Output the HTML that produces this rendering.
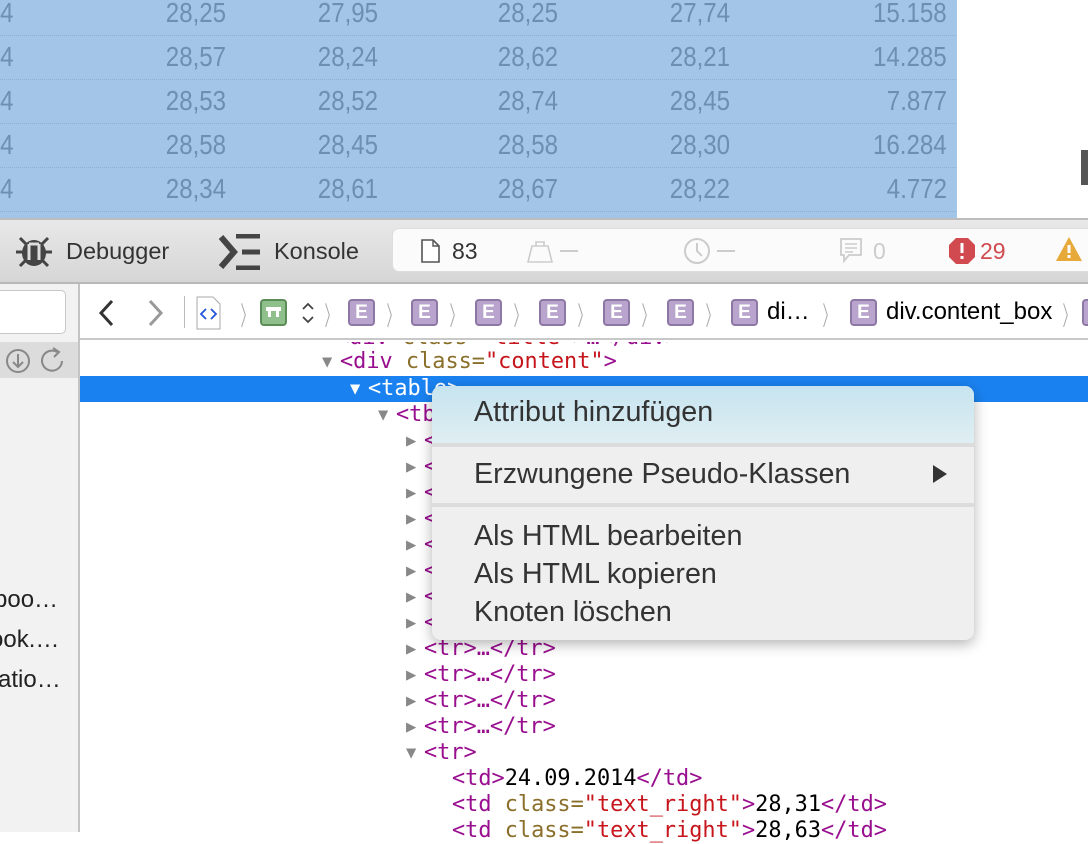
<!DOCTYPE html>
<html><head><meta charset="utf-8"><style>
*{margin:0;padding:0;box-sizing:border-box}
body{width:1088px;height:832px;overflow:hidden;position:relative;background:#fff;font-family:"Liberation Sans",sans-serif}
.abs{position:absolute}
#top{left:0;top:0;width:957px;height:218px;background:#a3c5e7;overflow:hidden}
.tr{position:absolute;left:0;width:957px;height:44px;border-bottom:1px dotted #8fb0d0}
.tr span{position:absolute;top:6px;line-height:30px;font-size:28px;color:#6d8fb0;transform:scaleX(.86);transform-origin:right}
#tb{left:0;top:218px;width:1088px;height:66px;background:linear-gradient(#e8e8e8,#d6d6d6);border-top:2px solid #bdbdbd;border-bottom:2px solid #b8b8b8}
.tl{position:absolute;font-size:23.5px;color:#333;top:18px}
#tabs{left:392px;top:228px;width:720px;height:44px;background:#fbfbfb;border-radius:7px;border:1px solid #ddd}
#bc{left:80px;top:284px;width:1008px;height:56px;background:#fff;border-bottom:2px solid #c8c8c8}
#side{left:0;top:284px;width:80px;height:548px;background:#f2f2f2;border-right:2px solid #c4c4c4}
.E{position:absolute;top:299px;width:27px;height:27px;background:#b8a4cc;border:2px solid #8d77a6;border-radius:4px;color:#fff;font-size:19px;font-weight:bold;text-align:center;line-height:23px}
.ch{position:absolute;top:296px;color:#aaa;font-size:26px;transform:scaleX(.5)}
.ln{position:absolute;height:26px;font-family:"DejaVu Sans Mono","Liberation Mono",monospace;font-size:21.9px;line-height:26px;white-space:pre;color:#990e8f}
.t{display:inline-block;width:18px;color:#888;font-size:17px;vertical-align:top}
.at{color:#8a6f2a}.v{color:#c7151c}.k{color:#000}
#menu{left:432px;top:386px;width:542px;height:254px;background:#efefef;border-radius:9px;box-shadow:0 4px 14px rgba(0,0,0,.3);overflow:hidden}
.mi{position:absolute;left:42px;font-size:28.7px;color:#333;line-height:32px}
.sep{position:absolute;left:0;width:542px;height:4px;background:#dcdcdc}
.sb{position:absolute;font-size:24px;color:#222}
</style></head><body>
<div id="top" class="abs">
 <div class="tr" style="top:-8px"><span style="right:943px">4</span><span style="right:731px">28,25</span><span style="right:579px">27,95</span><span style="right:399px">28,25</span><span style="right:227px">27,74</span><span style="right:10px">15.158</span></div>
 <div class="tr" style="top:36px"><span style="right:943px">4</span><span style="right:731px">28,57</span><span style="right:579px">28,24</span><span style="right:399px">28,62</span><span style="right:227px">28,21</span><span style="right:10px">14.285</span></div>
 <div class="tr" style="top:80px"><span style="right:943px">4</span><span style="right:731px">28,53</span><span style="right:579px">28,52</span><span style="right:399px">28,74</span><span style="right:227px">28,45</span><span style="right:10px">7.877</span></div>
 <div class="tr" style="top:124px"><span style="right:943px">4</span><span style="right:731px">28,58</span><span style="right:579px">28,45</span><span style="right:399px">28,58</span><span style="right:227px">28,30</span><span style="right:10px">16.284</span></div>
 <div class="tr" style="top:168px"><span style="right:943px">4</span><span style="right:731px">28,34</span><span style="right:579px">28,61</span><span style="right:399px">28,67</span><span style="right:227px">28,22</span><span style="right:10px">4.772</span></div>
</div>
<div class="abs" style="left:1081px;top:150px;width:7px;height:35px;background:#555"></div>
<div id="tb" class="abs">
 <svg class="abs" style="left:12px;top:12px" width="44" height="40" viewBox="0 0 44 40"><g stroke="#444" stroke-width="3" fill="none"><path d="M4 20h36M8 6l6 6M36 6l-6 6M8 34l6-6M36 34l-6-6"/></g><ellipse cx="22" cy="21" rx="12" ry="13" fill="#444"/><path d="M17 12v16M27 12v16M17 12h10" stroke="#ddd" stroke-width="3" fill="none"/></svg>
 <div class="tl" style="left:66px">Debugger</div>
 <svg class="abs" style="left:218px;top:14px" width="46" height="36" viewBox="0 0 46 36"><path d="M3 3l13 15-13 15" stroke="#444" stroke-width="6" fill="none"/><path d="M18 2h24M24 18h18M18 34h24" stroke="#444" stroke-width="5"/></svg>
 <div class="tl" style="left:274px">Konsole</div>
</div>
<div id="tabs" class="abs">
 <svg class="abs" style="left:28px;top:10px" width="20" height="24"><path d="M1 1h11l6 6v16H1z" fill="#fff" stroke="#555" stroke-width="1.6"/><path d="M12 1v6h6" fill="none" stroke="#555" stroke-width="1.4"/></svg>
 <div class="abs" style="left:59px;top:9px;font-size:23px;color:#333">83</div>
 <svg class="abs" style="left:134px;top:10px" width="26" height="24"><path d="M1 23l4-16h16l4 16zM9 7V3h8v4" fill="none" stroke="#ccc" stroke-width="1.6"/></svg>
 <div class="abs" style="left:167px;top:21px;width:18px;height:2px;background:#ccc"></div>
 <svg class="abs" style="left:290px;top:8px" width="28" height="28"><circle cx="14" cy="14" r="12" fill="none" stroke="#ccc" stroke-width="2"/><path d="M14 6v8l5 5" fill="none" stroke="#ccc" stroke-width="2"/></svg>
 <div class="abs" style="left:324px;top:21px;width:18px;height:2px;background:#ccc"></div>
 <svg class="abs" style="left:446px;top:8px" width="24" height="28"><path d="M2 2h20v16H10l-5 6v-6H2z" fill="none" stroke="#ccc" stroke-width="1.8"/><path d="M6 7h12M6 11h12M6 15h8" stroke="#ccc" stroke-width="1.5"/></svg>
 <div class="abs" style="left:480px;top:9px;font-size:23px;color:#ccc">0</div>
 <svg class="abs" style="left:555px;top:8px" width="28" height="28"><polygon points="8,1 20,1 27,8 27,20 20,27 8,27 1,20 1,8" fill="#d04a4f"/><path d="M14 6v10M14 19v3" stroke="#fff" stroke-width="3"/></svg>
 <div class="abs" style="left:587px;top:9px;font-size:23px;color:#d04a4f">29</div>
 <svg class="abs" style="left:662px;top:7px" width="28" height="26"><polygon points="14,1 27,25 1,25" fill="#e6a93a"/><path d="M14 9v8M14 19v3" stroke="#fff" stroke-width="3"/></svg>
</div>
<div id="side" class="abs">
 <div class="abs" style="left:-10px;top:6px;width:76px;height:44px;background:#fff;border:1px solid #c8c8c8;border-radius:5px"></div>
 <div class="abs" style="left:0;top:58px;width:78px;height:36px;background:#dcdcdc"></div>
 <svg class="abs" style="left:5px;top:63px" width="60" height="28"><circle cx="13" cy="14" r="11" fill="none" stroke="#888" stroke-width="2"/><path d="M13 7v13M8 15l5 5 5-5" fill="none" stroke="#888" stroke-width="2"/><path d="M57 14a10 10 0 1 1-5-9" fill="none" stroke="#888" stroke-width="2"/><path d="M48 1l6 4-5 5" fill="none" stroke="#888" stroke-width="2"/></svg>
 <div class="sb" style="left:-6px;top:302px">boo…</div>
 <div class="sb" style="left:-10px;top:342px">ook.…</div>
 <div class="sb" style="left:-2px;top:382px">atio…</div>
</div>
<div id="bc" class="abs"></div>
<svg class="abs" style="left:94px;top:298px" width="80" height="30"><path d="M18 3L7 15l11 12" fill="none" stroke="#333" stroke-width="3"/><path d="M56 3l11 12-11 12" fill="none" stroke="#999" stroke-width="3"/></svg>
<div class="abs" style="left:184px;top:296px;width:1px;height:32px;background:#bbb"></div>
<svg class="abs" style="left:196px;top:296px" width="26" height="34"><path d="M1 1h16l7 7v25H1z" fill="#fff" stroke="#aaa"/><path d="M10 13l-5 5 5 5M15 13l5 5-5 5" fill="none" stroke="#2255dd" stroke-width="1.8"/></svg>
<div class="ch" style="left:234px">〉</div>
<div class="abs" style="left:260px;top:299px;width:27px;height:27px;background:#8fbf8a;border:2px solid #5b8d57;border-radius:4px"><div style="position:absolute;left:4px;top:6px;width:15px;height:4px;background:#fff"></div><div style="position:absolute;left:6px;top:10px;width:3px;height:6px;background:#fff"></div><div style="position:absolute;left:14px;top:10px;width:3px;height:6px;background:#fff"></div></div>
<svg class="abs" style="left:300px;top:301px" width="16" height="24"><path d="M3 8l5-5 5 5M3 16l5 5 5-5" fill="none" stroke="#444" stroke-width="1.8"/></svg>
<div class="ch" style="left:318px">〉</div>
<div class="E" style="left:348px">E</div><div class="ch" style="left:380px">〉</div>
<div class="E" style="left:411px">E</div><div class="ch" style="left:443px">〉</div>
<div class="E" style="left:475px">E</div><div class="ch" style="left:507px">〉</div>
<div class="E" style="left:539px">E</div><div class="ch" style="left:571px">〉</div>
<div class="E" style="left:603px">E</div><div class="ch" style="left:635px">〉</div>
<div class="E" style="left:667px">E</div><div class="ch" style="left:699px">〉</div>
<div class="E" style="left:731px">E</div><div class="abs" style="left:767px;top:298px;font-size:24px;color:#000">di…</div><div class="ch" style="left:816px">〉</div>
<div class="E" style="left:850px">E</div><div class="abs" style="left:886px;top:298px;font-size:24px;color:#000">div.content_box</div><div class="ch" style="left:1056px">〉</div>
<div class="E" style="left:1082px">E</div>
<div class="abs" style="left:80px;top:342px;width:1008px;height:8px;overflow:hidden"><div class="ln" style="left:256px;top:-17px">&lt;div <span class="at">class=</span><span class="v">"title"</span>&gt;…&lt;/div&gt;</div></div>
<div class="ln" style="left:322px;top:349px"><span class="t">▼</span>&lt;div <span class="at">class=</span><span class="v">"content"</span>&gt;</div>
<div class="abs" style="left:80px;top:376px;width:1008px;height:26px;background:#1a82f0"></div>
<div class="ln" style="left:350px;top:376px;color:#fff"><span class="t" style="color:#fff">▼</span>&lt;table&gt;</div>
<div class="ln" style="left:378px;top:402px"><span class="t">▼</span>&lt;tbody&gt;</div>
<div class="ln" style="left:406px;top:428px"><span class="t">▶</span>&lt;tr&gt;…&lt;/tr&gt;</div>
<div class="ln" style="left:406px;top:454px"><span class="t">▶</span>&lt;tr&gt;…&lt;/tr&gt;</div>
<div class="ln" style="left:406px;top:480px"><span class="t">▶</span>&lt;tr&gt;…&lt;/tr&gt;</div>
<div class="ln" style="left:406px;top:506px"><span class="t">▶</span>&lt;tr&gt;…&lt;/tr&gt;</div>
<div class="ln" style="left:406px;top:532px"><span class="t">▶</span>&lt;tr&gt;…&lt;/tr&gt;</div>
<div class="ln" style="left:406px;top:558px"><span class="t">▶</span>&lt;tr&gt;…&lt;/tr&gt;</div>
<div class="ln" style="left:406px;top:584px"><span class="t">▶</span>&lt;tr&gt;…&lt;/tr&gt;</div>
<div class="ln" style="left:406px;top:610px"><span class="t">▶</span>&lt;tr&gt;…&lt;/tr&gt;</div>
<div class="ln" style="left:406px;top:636px"><span class="t">▶</span>&lt;tr&gt;…&lt;/tr&gt;</div>
<div class="ln" style="left:406px;top:662px"><span class="t">▶</span>&lt;tr&gt;…&lt;/tr&gt;</div>
<div class="ln" style="left:406px;top:688px"><span class="t">▶</span>&lt;tr&gt;…&lt;/tr&gt;</div>
<div class="ln" style="left:406px;top:714px"><span class="t">▶</span>&lt;tr&gt;…&lt;/tr&gt;</div>
<div class="ln" style="left:406px;top:740px"><span class="t">▼</span>&lt;tr&gt;</div>
<div class="ln" style="left:452px;top:766px">&lt;td&gt;<span class="k">24.09.2014</span>&lt;/td&gt;</div>
<div class="ln" style="left:452px;top:792px">&lt;td <span class="at">class=</span><span class="v">"text_right"</span>&gt;<span class="k">28,31</span>&lt;/td&gt;</div>
<div class="ln" style="left:452px;top:818px">&lt;td <span class="at">class=</span><span class="v">"text_right"</span>&gt;<span class="k">28,63</span>&lt;/td&gt;</div>
<div id="menu" class="abs">
 <div class="abs" style="left:0;top:0;width:542px;height:57px;background:linear-gradient(#c6e4f0,#dfeef2)"></div>
 <div class="sep" style="top:57px"></div>
 <div class="sep" style="top:117px"></div>
 <div class="mi" style="top:10px">Attribut hinzufügen</div>
 <div class="mi" style="top:72px">Erzwungene Pseudo-Klassen</div>
 <svg class="abs" style="left:500px;top:78px" width="16" height="20"><polygon points="1,1 15,10 1,19" fill="#333"/></svg>
 <div class="mi" style="top:134px">Als HTML bearbeiten</div>
 <div class="mi" style="top:172px">Als HTML kopieren</div>
 <div class="mi" style="top:210px">Knoten löschen</div>
</div>
</body></html>
